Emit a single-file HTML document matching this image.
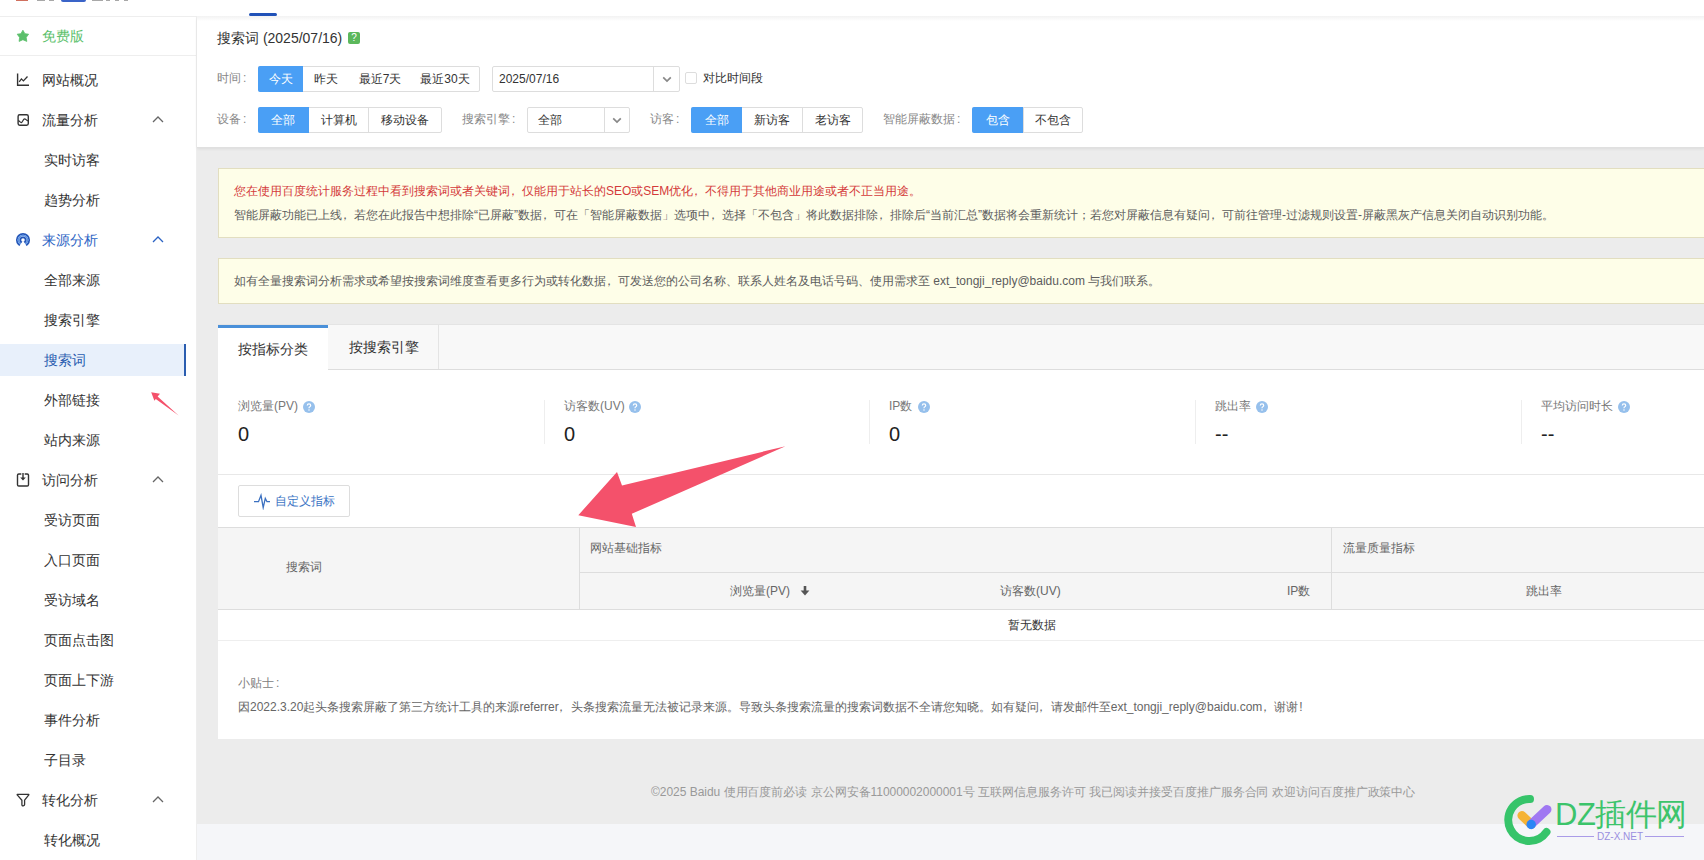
<!DOCTYPE html>
<html><head><meta charset="utf-8">
<style>
*{margin:0;padding:0;box-sizing:border-box}
html,body{width:1704px;height:860px;overflow:hidden;background:#ececec;font-family:"Liberation Sans",sans-serif;color:#333}
.a{position:absolute;white-space:nowrap}
#top{z-index:2;position:absolute;left:0;top:0;width:1704px;height:16px;background:#fff}
#side{position:absolute;left:0;top:0;width:197px;height:860px;background:#fff;border-right:1px solid #eee}
.si{position:absolute;left:0;width:184px;height:32px;font-size:14px;line-height:32px}
.si .t{position:absolute;left:42px;top:0}
.si.sub .t{left:44px}
.chev{position:absolute;left:150px;top:10px}
.ic{position:absolute;left:14px;top:8px}
.si.act{background:#e8f0fb;color:#2a5db0}
.si.act:after{content:"";position:absolute;left:184px;top:0;width:2px;height:32px;background:#2a5db0}
.si.blue{color:#2b63c4}
.si.free{color:#5bbf6b}
#mtop{position:absolute;left:197px;top:17px;width:1507px;height:131px;background:#fff;border-bottom:1px solid #e0e0e0;box-shadow:0 1px 3px rgba(0,0,0,0.07)}
#mshadow{position:absolute;left:197px;top:16px;width:1507px;height:5px;background:linear-gradient(#f2f2f2,#fff);z-index:1}
.cl{font-style:normal;padding-left:2px}
.cm{font-style:normal;position:relative;left:-3.5px}
.lbl{position:absolute;font-size:12px;color:#888;line-height:14px}
.grp{position:absolute;height:26px;border:1px solid #ddd;border-radius:2px;background:#fff;display:flex;font-size:12px;color:#333}
.grp span{display:block;height:24px;line-height:24px;text-align:center}
.grp span.on{background:#4a9ff5;color:#fff;margin:-1px 0 -1px -1px;height:26px;line-height:26px;border-radius:2px 0 0 2px}
.grp span.bd{border-left:1px solid #ddd}
.notice{position:absolute;left:218px;width:1486px;background:#fefee8;border:1px solid #e2dec0;border-right:none;font-size:12px;color:#666}
#panel > .a{margin-left:-1px}
#panel{position:absolute;left:218px;top:324px;width:1486px;height:415px;background:#fff}
</style></head><body>
<div id="top">
<div class="a" style="left:16px;top:0;width:12px;height:1px;background:#d0705f"></div>
<div class="a" style="left:37px;top:0;width:8px;height:1px;background:#a8a8a8"></div>
<div class="a" style="left:49px;top:0;width:5px;height:1px;background:#a8a8a8"></div>
<div class="a" style="left:61px;top:0;width:25px;height:2px;border-radius:0 0 5px 5px;background:#3a64c8"></div>
<div class="a" style="left:92px;top:0;width:11px;height:1px;background:#a8a8a8"></div>
<div class="a" style="left:106px;top:0;width:4px;height:1px;background:#a8a8a8"></div>
<div class="a" style="left:115px;top:0;width:4px;height:1px;background:#a8a8a8"></div>
<div class="a" style="left:124px;top:0;width:4px;height:1px;background:#a8a8a8"></div>
<div class="a" style="left:249px;top:13px;width:28px;height:3px;border-radius:2px;background:#2152b8"></div>
</div>
<div id="side">
<div class="si free" style="top:20px;height:32px"><svg class="ic" width="18" height="18" viewBox="0 0 18 18"><path d="M8.9 2.2L10.9 5.7L14.6 6.2L12.2 9.4L12.8 13.4L8.9 11.7L5.1 13.4L5.6 9.4L3.2 6.2L6.9 5.7Z" fill="#5bbf6b" stroke="#5bbf6b" stroke-width="0.8" stroke-linejoin="round"/></svg><span class="t">免费版</span></div>
<div style="position:absolute;left:0;top:55px;width:196px;height:1px;background:#eee"></div>
<div class="si" style="top:64px"><svg class="ic" width="18" height="18" viewBox="0 0 18 18"><path d="M3.6 1.5V13.2H15" fill="none" stroke="#333" stroke-width="1.4"/><path d="M5.2 9.8L7.4 6.9L9.4 8.9L13.5 4.5" fill="none" stroke="#333" stroke-width="1.3"/></svg><span class="t">网站概况</span></div>
<div class="si" style="top:104px"><svg class="ic" width="18" height="18" viewBox="0 0 18 18"><rect x="4.1" y="2.8" width="10.2" height="10.4" rx="1.6" fill="none" stroke="#333" stroke-width="1.4"/><path d="M4.2 8.6C5.5 8.8 6.2 10.8 7.4 10.6C8.8 10.4 9 6.8 10.6 6.8C12 6.8 12.2 8.8 14.2 8.8" fill="none" stroke="#333" stroke-width="1.2"/></svg><span class="t">流量分析</span><svg class="chev" width="16" height="12" viewBox="0 0 16 12"><path d="M3 8L8 3L13 8" fill="none" stroke="#666" stroke-width="1.3"/></svg></div>
<div class="si sub" style="top:144px"><span class="t">实时访客</span></div>
<div class="si sub" style="top:184px"><span class="t">趋势分析</span></div>
<div class="si blue" style="top:224px"><svg class="ic" width="18" height="18" viewBox="0 0 18 18"><circle cx="9" cy="8" r="6.2" fill="none" stroke="#2456b8" stroke-width="1.7"/><circle cx="9" cy="8" r="4.5" fill="none" stroke="#5b93e4" stroke-width="1.7"/><circle cx="9" cy="8" r="2.7" fill="none" stroke="#2456b8" stroke-width="1.8"/><path d="M9 8.6L3.6 17H14.4Z" fill="#fff"/></svg><span class="t">来源分析</span><svg class="chev" width="16" height="12" viewBox="0 0 16 12"><path d="M3 8L8 3L13 8" fill="none" stroke="#2b63c4" stroke-width="1.3"/></svg></div>
<div class="si sub" style="top:264px"><span class="t">全部来源</span></div>
<div class="si sub" style="top:304px"><span class="t">搜索引擎</span></div>
<div class="si sub act" style="top:344px"><span class="t">搜索词</span></div>
<div class="si sub" style="top:384px"><span class="t">外部链接</span></div>
<div class="si sub" style="top:424px"><span class="t">站内来源</span></div>
<div class="si" style="top:464px"><svg class="ic" width="18" height="18" viewBox="0 0 18 18"><path d="M7.3 2H4.8Q3.5 2 3.5 3.3V12.7Q3.5 14 4.8 14H13.2Q14.5 14 14.5 12.7V3.3Q14.5 2 13.2 2H10.7" fill="none" stroke="#333" stroke-width="1.4"/><path d="M9 1V6" stroke="#333" stroke-width="1.4"/><path d="M6.2 5.4H11.8L9 8.4Z" fill="#333"/></svg><span class="t">访问分析</span><svg class="chev" width="16" height="12" viewBox="0 0 16 12"><path d="M3 8L8 3L13 8" fill="none" stroke="#666" stroke-width="1.3"/></svg></div>
<div class="si sub" style="top:504px"><span class="t">受访页面</span></div>
<div class="si sub" style="top:544px"><span class="t">入口页面</span></div>
<div class="si sub" style="top:584px"><span class="t">受访域名</span></div>
<div class="si sub" style="top:624px"><span class="t">页面点击图</span></div>
<div class="si sub" style="top:664px"><span class="t">页面上下游</span></div>
<div class="si sub" style="top:704px"><span class="t">事件分析</span></div>
<div class="si sub" style="top:744px"><span class="t">子目录</span></div>
<div class="si" style="top:784px"><svg class="ic" width="18" height="18" viewBox="0 0 18 18"><path d="M3.2 2.3H14.8V2.9L10.6 8.2V12.6Q10.6 13.6 9.3 13.8Q7.9 14 7.9 12.8V8.2L3.2 2.9Z" fill="none" stroke="#333" stroke-width="1.3" stroke-linejoin="round"/></svg><span class="t">转化分析</span><svg class="chev" width="16" height="12" viewBox="0 0 16 12"><path d="M3 8L8 3L13 8" fill="none" stroke="#666" stroke-width="1.3"/></svg></div>
<div class="si sub" style="top:824px"><span class="t">转化概况</span></div>
</div>
<div id="mshadow"></div>
<div class="a" style="left:0;top:16px;width:196px;height:1px;background:#eee;z-index:1"></div>
<div id="mtop">
<div class="a" style="left:20px;top:12px;font-size:14px;line-height:18px;color:#333">搜索词 (2025/07/16)</div>
<div class="a" style="left:151px;top:15px;width:12px;height:12px;border-radius:2px;background:#5cb85c;color:#fff;font-size:10px;line-height:12px;text-align:center">?</div>
<div class="lbl" style="left:20px;top:54px">时间<i class="cl">:</i></div>
<div class="grp" style="left:61px;top:49px;width:222px"><span class="on" style="width:45px">今天</span><span style="width:46px">昨天</span><span style="width:62px">最近7天</span><span style="width:68px">最近30天</span></div>
<div class="grp" style="left:295px;top:49px;width:188px"><span style="width:160px;text-align:left;padding-left:6px">2025/07/16</span><span class="bd" style="width:26px"><svg width="12" height="24" viewBox="0 0 12 24"><path d="M2.2 10.3L6 14.1L9.8 10.3" fill="none" stroke="#888" stroke-width="1.7"/></svg></span></div>
<div class="a" style="left:488px;top:55px;width:12px;height:12px;border:1px solid #ddd;border-radius:2px;background:#fff"></div>
<div class="a" style="left:506px;top:54px;font-size:12px;line-height:14px;color:#333">对比时间段</div>
<div class="lbl" style="left:20px;top:95px">设备<i class="cl">:</i></div>
<div class="grp" style="left:61px;top:90px;width:184px"><span class="on" style="width:51px">全部</span><span style="width:60px">计算机</span><span class="bd" style="width:73px">移动设备</span></div>
<div class="lbl" style="left:265px;top:95px">搜索引擎<i class="cl">:</i></div>
<div class="grp" style="left:330px;top:90px;width:103px"><span style="width:76px;text-align:left;padding-left:10px">全部</span><span class="bd" style="width:25px"><svg width="12" height="24" viewBox="0 0 12 24"><path d="M2.2 10.3L6 14.1L9.8 10.3" fill="none" stroke="#888" stroke-width="1.7"/></svg></span></div>
<div class="lbl" style="left:453px;top:95px">访客<i class="cl">:</i></div>
<div class="grp" style="left:494px;top:90px;width:172px"><span class="on" style="width:51px">全部</span><span style="width:60px">新访客</span><span class="bd" style="width:60px">老访客</span></div>
<div class="lbl" style="left:686px;top:95px">智能屏蔽数据<i class="cl">:</i></div>
<div class="grp" style="left:775px;top:90px;width:111px"><span class="on" style="width:51px">包含</span><span class="bd" style="width:59px">不包含</span></div>
</div>
<div class="notice" style="top:168px;height:70px">
<div class="a" style="left:15px;top:15px;line-height:14px;color:#d43a3a">您在使用百度统计服务过程中看到搜索词或者关键词<i class="cm">，</i>仅能用于站长的SEO或SEM优化<i class="cm">，</i>不得用于其他商业用途或者不正当用途。</div>
<div class="a" style="left:15px;top:39px;line-height:14px;color:#5c5c5c">智能屏蔽功能已上线<i class="cm">，</i>若您在此报告中想排除“已屏蔽”数据<i class="cm">，</i>可在「智能屏蔽数据」选项中<i class="cm">，</i>选择「不包含」将此数据排除<i class="cm">，</i>排除后“当前汇总”数据将会重新统计；若您对屏蔽信息有疑问<i class="cm">，</i>可前往管理-过滤规则设置-屏蔽黑灰产信息关闭自动识别功能。</div>
</div>
<div class="notice" style="top:258px;height:46px">
<div class="a" style="left:15px;top:15px;line-height:14px;color:#5c5c5c">如有全量搜索词分析需求或希望按搜索词维度查看更多行为或转化数据<i class="cm">，</i>可发送您的公司名称、联系人姓名及电话号码、使用需求至 ext_tongji_reply@baidu.com 与我们联系。</div>
</div>
<div id="panel">
<div class="a" style="left:1px;top:0;width:1486px;height:46px;background:#f8f8f8;border-top:1px solid #e4e4e4;border-bottom:1px solid #ddd"></div>
<div class="a" style="left:1px;top:1px;width:110px;height:45px;background:#fff;border-top:3px solid #4a90d9"></div>
<div class="a" style="left:111px;top:1px;width:111px;height:44px;border-right:1px solid #e4e4e4"></div>
<div class="a" style="left:21px;top:16px;font-size:14px;line-height:18px;color:#333">按指标分类</div>
<div class="a" style="left:132px;top:14px;font-size:14px;line-height:18px;color:#333">按搜索引擎</div>
<div class="a" style="left:21px;top:75px;font-size:12px;line-height:14px;color:#777">浏览量(PV)</div>
<svg class="a" style="left:86px;top:77px" width="12" height="12" viewBox="0 0 12 12"><circle cx="6" cy="6" r="6" fill="#96c0ec"/><path d="M4.3 4.6Q4.3 2.9 6 2.9Q7.7 2.9 7.7 4.4Q7.7 5.3 6.8 5.8Q6 6.2 6 7.2" fill="none" stroke="#fff" stroke-width="1.2"/><circle cx="6" cy="9" r="0.75" fill="#fff"/></svg>
<div class="a" style="left:21px;top:98px;font-size:20px;line-height:24px;color:#222">0</div>
<div class="a" style="left:347px;top:75px;font-size:12px;line-height:14px;color:#777">访客数(UV)</div>
<svg class="a" style="left:412px;top:77px" width="12" height="12" viewBox="0 0 12 12"><circle cx="6" cy="6" r="6" fill="#96c0ec"/><path d="M4.3 4.6Q4.3 2.9 6 2.9Q7.7 2.9 7.7 4.4Q7.7 5.3 6.8 5.8Q6 6.2 6 7.2" fill="none" stroke="#fff" stroke-width="1.2"/><circle cx="6" cy="9" r="0.75" fill="#fff"/></svg>
<div class="a" style="left:347px;top:98px;font-size:20px;line-height:24px;color:#222">0</div>
<div class="a" style="left:327px;top:76px;width:1px;height:44px;background:#eee"></div>
<div class="a" style="left:672px;top:75px;font-size:12px;line-height:14px;color:#777">IP数</div>
<svg class="a" style="left:701px;top:77px" width="12" height="12" viewBox="0 0 12 12"><circle cx="6" cy="6" r="6" fill="#96c0ec"/><path d="M4.3 4.6Q4.3 2.9 6 2.9Q7.7 2.9 7.7 4.4Q7.7 5.3 6.8 5.8Q6 6.2 6 7.2" fill="none" stroke="#fff" stroke-width="1.2"/><circle cx="6" cy="9" r="0.75" fill="#fff"/></svg>
<div class="a" style="left:672px;top:98px;font-size:20px;line-height:24px;color:#222">0</div>
<div class="a" style="left:652px;top:76px;width:1px;height:44px;background:#eee"></div>
<div class="a" style="left:998px;top:75px;font-size:12px;line-height:14px;color:#777">跳出率</div>
<svg class="a" style="left:1039px;top:77px" width="12" height="12" viewBox="0 0 12 12"><circle cx="6" cy="6" r="6" fill="#96c0ec"/><path d="M4.3 4.6Q4.3 2.9 6 2.9Q7.7 2.9 7.7 4.4Q7.7 5.3 6.8 5.8Q6 6.2 6 7.2" fill="none" stroke="#fff" stroke-width="1.2"/><circle cx="6" cy="9" r="0.75" fill="#fff"/></svg>
<div class="a" style="left:998px;top:98px;font-size:20px;line-height:24px;color:#222">--</div>
<div class="a" style="left:978px;top:76px;width:1px;height:44px;background:#eee"></div>
<div class="a" style="left:1324px;top:75px;font-size:12px;line-height:14px;color:#777">平均访问时长</div>
<svg class="a" style="left:1401px;top:77px" width="12" height="12" viewBox="0 0 12 12"><circle cx="6" cy="6" r="6" fill="#96c0ec"/><path d="M4.3 4.6Q4.3 2.9 6 2.9Q7.7 2.9 7.7 4.4Q7.7 5.3 6.8 5.8Q6 6.2 6 7.2" fill="none" stroke="#fff" stroke-width="1.2"/><circle cx="6" cy="9" r="0.75" fill="#fff"/></svg>
<div class="a" style="left:1324px;top:98px;font-size:20px;line-height:24px;color:#222">--</div>
<div class="a" style="left:1304px;top:76px;width:1px;height:44px;background:#eee"></div>
<div class="a" style="left:1px;top:150px;width:1486px;height:1px;background:#e8e8e8"></div>
<div class="a" style="left:21px;top:161px;width:112px;height:32px;border:1px solid #ddd;border-radius:2px;background:#fff"></div>
<svg class="a" style="left:36px;top:169px" width="18" height="17" viewBox="0 0 18 17"><path d="M1 8.7H5.5L8 2.3L10.2 14.6L12.3 5.4L14 8.7H17" fill="none" stroke="#3b70c0" stroke-width="1.3" stroke-linejoin="miter" stroke-miterlimit="10"/></svg>
<div class="a" style="left:58px;top:170px;font-size:12px;line-height:14px;color:#3b74c4">自定义指标</div>
<div class="a" style="left:1px;top:203px;width:1486px;height:83px;background:#f5f5f5;border-top:1px solid #ddd;border-bottom:1px solid #ddd"></div>
<div class="a" style="left:362px;top:203px;width:1px;height:82px;background:#ddd"></div>
<div class="a" style="left:1114px;top:203px;width:1px;height:82px;background:#ddd"></div>
<div class="a" style="left:362px;top:248px;width:1125px;height:1px;background:#ddd"></div>
<div class="a" style="left:69px;top:236px;font-size:12px;line-height:14px;color:#666">搜索词</div>
<div class="a" style="left:373px;top:217px;font-size:12px;line-height:14px;color:#666">网站基础指标</div>
<div class="a" style="left:1126px;top:217px;font-size:12px;line-height:14px;color:#666">流量质量指标</div>
<div class="a" style="left:513px;top:260px;font-size:12px;line-height:14px;color:#666">浏览量(PV)</div>
<svg class="a" style="left:583px;top:261px" width="10" height="12" viewBox="0 0 10 12"><path d="M5 1V6.5" stroke="#555" stroke-width="2.6"/><path d="M0.6 5.6H9.4L5 10.6Z" fill="#555"/></svg>
<div class="a" style="left:783px;top:260px;font-size:12px;line-height:14px;color:#666">访客数(UV)</div>
<div class="a" style="left:1070px;top:260px;font-size:12px;line-height:14px;color:#666">IP数</div>
<div class="a" style="left:1309px;top:260px;font-size:12px;line-height:14px;color:#666">跳出率</div>
<div class="a" style="left:1px;top:316px;width:1486px;height:1px;background:#eee"></div>
<div class="a" style="left:791px;top:294px;font-size:12px;line-height:14px;color:#333">暂无数据</div>
<div class="a" style="left:21px;top:352px;font-size:12px;line-height:14px;color:#808080">小贴士<i class="cl">:</i></div>
<div class="a" style="left:21px;top:376px;font-size:12px;line-height:14px;color:#666">因2022.3.20起头条搜索屏蔽了第三方统计工具的来源referrer<i class="cm">，</i>头条搜索流量无法被记录来源。导致头条搜索流量的搜索词数据不全请您知晓。如有疑问<i class="cm">，</i>请发邮件至ext_tongji_reply@baidu.com<i class="cm">，</i>谢谢<i style="font-style:normal;padding-left:1px">!</i></div>
</div>
<div class="a" style="left:197px;top:824px;width:1507px;height:36px;background:#f5f6f9"></div>
<div class="a" style="left:651px;top:785px;font-size:12px;line-height:14px;color:#999;letter-spacing:-0.03px">©2025 Baidu 使用百度前必读 京公网安备11000002000001号 互联网信息服务许可 我已阅读并接受百度推广服务合同 欢迎访问百度推广政策中心</div>
<svg class="a" style="left:0;top:0;z-index:5" width="1704" height="860" viewBox="0 0 1704 860">
<path d="M785.5 446.2L622 485.6L617 472L578.3 515.2L636 527L631.8 513.8Z" fill="#f4516b"/>
<path d="M151.2 392.3L160 393.7L157.6 396.6L178.6 415.6L155.8 399L154.4 400.7Z" fill="#f4516b"/>
</svg>
<div id="dz" class="a" style="left:1500px;top:792px;width:204px;height:60px;z-index:6">
<svg class="a" style="left:0;top:0" width="60" height="60" viewBox="0 0 60 60">
<path d="M30 7A21 21 0 1 0 46.5 40" fill="none" stroke="#36c46a" stroke-width="8" stroke-linecap="round"/>
<path d="M21.9 23.5L31.2 32.3" stroke="#f5b335" stroke-width="9" stroke-linecap="round"/>
<path d="M31.2 32.3L47 17.4" stroke="#a078f2" stroke-width="9" stroke-linecap="round"/>
<circle cx="31.2" cy="32.5" r="4.7" fill="#2a86f5"/>
</svg>
<div class="a" style="left:55px;top:5px;font-size:31px;line-height:36px;color:#3cc46b;letter-spacing:-0.5px">DZ插件网</div>
<div class="a" style="left:57px;top:44px;width:37px;height:1px;background:#aa9ce8"></div>
<div class="a" style="left:145px;top:44px;width:39px;height:1px;background:#aa9ce8"></div>
<div class="a" style="left:97px;top:39px;font-size:10px;line-height:11px;color:#9a8fe0">DZ-X.NET</div>
</div>
</body></html>
